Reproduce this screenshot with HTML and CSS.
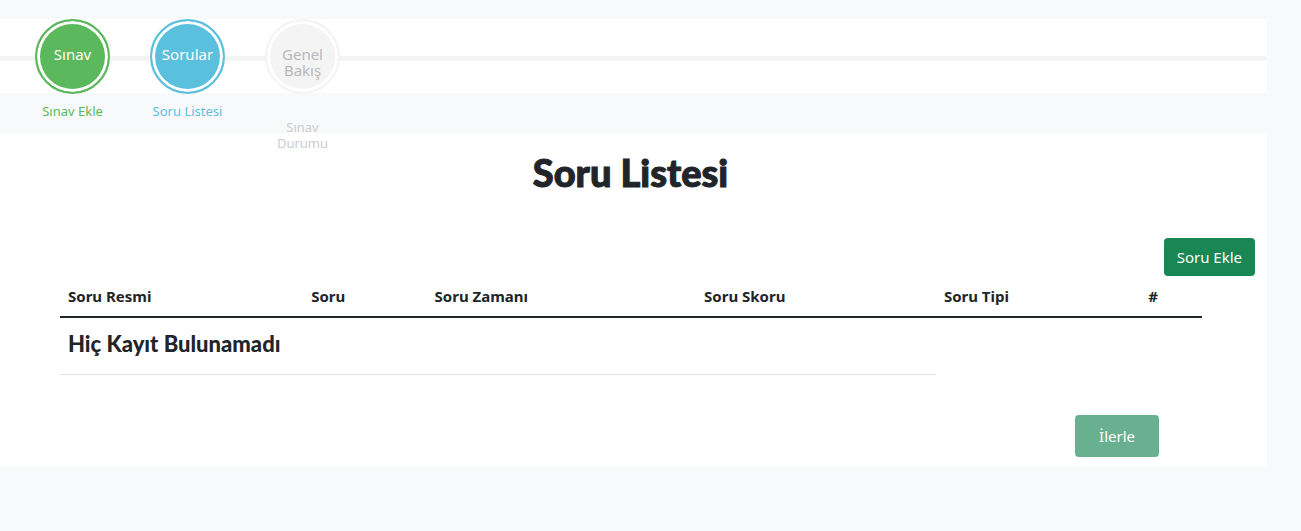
FILE: index.html
```html
<!DOCTYPE html>
<html lang="tr">
<head>
<meta charset="utf-8">
<title>Soru Listesi</title>
<link rel="stylesheet" href="styles.css">
</head>
<body>
<nav class="stepper" aria-label="Sınav adımları">
  <ol class="steps">
    <li class="step step-done"><span class="step-name">Sınav</span><span class="step-label">Sınav Ekle</span></li>
    <li class="step step-current"><span class="step-name">Sorular</span><span class="step-label">Soru Listesi</span></li>
    <li class="step step-disabled"><span class="step-name">Genel Bakış</span><span class="step-label">Sınav Durumu</span></li>
  </ol>
</nav>
<main class="card">
  <h1 class="title">Soru Listesi</h1>
  <div class="toolbar"><button type="button" class="button">Soru Ekle</button></div>
  <div class="table-wrap">
    <table class="questions">
      <colgroup>
        <col class="col-image"><col class="col-question"><col class="col-time"><col class="col-score"><col class="col-type"><col>
      </colgroup>
      <thead>
        <tr><th scope="col">Soru Resmi</th><th scope="col">Soru</th><th scope="col">Soru Zamanı</th><th scope="col">Soru Skoru</th><th scope="col">Soru Tipi</th><th scope="col">#</th></tr>
      </thead>
      <tbody>
        <tr><td colspan="4"><h2 class="empty">Hiç Kayıt Bulunamadı</h2></td></tr>
      </tbody>
    </table>
  </div>
  <div class="actions"><button type="button" class="button button-next" disabled>İlerle</button></div>
</main>
</body>
</html>
```

FILE: styles.css
```css
*,
*::before {
  box-sizing: border-box;
}

body {
  margin: 0;
  padding: 19px 34px 0 0;
  background: #f8f9fb;
  color: #212529;
  font: 15px/24px "Segoe UI", "Noto Sans", "Open Sans", sans-serif;
}

/* Stepper */
.stepper {
  position: relative;
  height: 74px;
  margin-bottom: 40px;
  background: #fff;
}

.stepper::before {
  content: "";
  position: absolute;
  top: 37px;
  left: 0;
  right: 0;
  height: 5px;
  border-radius: 0 3px 3px 0;
  background: #f4f4f4;
}

.steps {
  display: flex;
  gap: 40px;
  margin: 0;
  padding: 0 0 0 35px;
  list-style: none;
}

.step {
  --tone: #f4f4f4;
  position: relative;
  z-index: 1;
  display: flex;
  flex-direction: column;
  gap: 41px;
  width: 75px;
  padding-top: 27px;
  line-height: 16px;
  text-align: center;
}

.step::before {
  content: "";
  position: absolute;
  z-index: -1;
  top: 0;
  left: 0;
  width: 75px;
  height: 75px;
  border: 2px solid var(--tone);
  border-radius: 50%;
  background: var(--tone);
  box-shadow: inset 0 0 0 3px #fff;
}

.step-name {
  padding: 0 8px;
  color: #fff;
  white-space: nowrap;
}

.step-label {
  font-size: 13px;
  color: var(--tone);
}

.step-done {
  --tone: #5cb85c;
}

.step-current {
  --tone: #5bc0de;
}

.step-current .step-name {
  padding: 0;
}

.step-disabled .step-name {
  color: #b8b8b8;
  white-space: normal;
}

.step-disabled .step-label {
  padding: 0 8px;
  color: #ccc;
}

/* Question list */
.card {
  padding: 17px 0 10px;
  background: #fff;
}

.title {
  margin: 0 66px 44px 60px;
  font: 900 38px/44px Lato, sans-serif;
  text-align: center;
  -webkit-text-stroke: 1px currentColor;
}

.toolbar {
  display: flex;
  justify-content: flex-end;
  padding-right: 12px;
}

.button {
  padding: 7px 13px;
  border: 0;
  border-radius: 4px;
  background: #198754;
  color: #fff;
  font: inherit;
}

.table-wrap {
  padding: 0 65px 0 60px;
}

.questions {
  width: 100%;
  table-layout: fixed;
  border-collapse: collapse;
  text-align: left;
}

.questions th,
.questions td {
  padding: 8px;
}

.questions th {
  border-bottom: 2px solid #212529;
  font-weight: 700;
}

.questions td {
  border-bottom: 1px solid #dee2e6;
}

.col-image {
  width: 21.3%;
}

.col-question {
  width: 10.8%;
}

.col-time {
  width: 23.6%;
}

.col-score {
  width: 21%;
}

.col-type {
  width: 17.9%;
}

.empty {
  margin: 0 0 4px;
  font: 900 22px/36px Lato, sans-serif;
}

.actions {
  display: flex;
  justify-content: flex-end;
  padding: 40px 108px 0 0;
}

.button-next {
  padding: 9px 24px;
  opacity: 0.65;
}
```
